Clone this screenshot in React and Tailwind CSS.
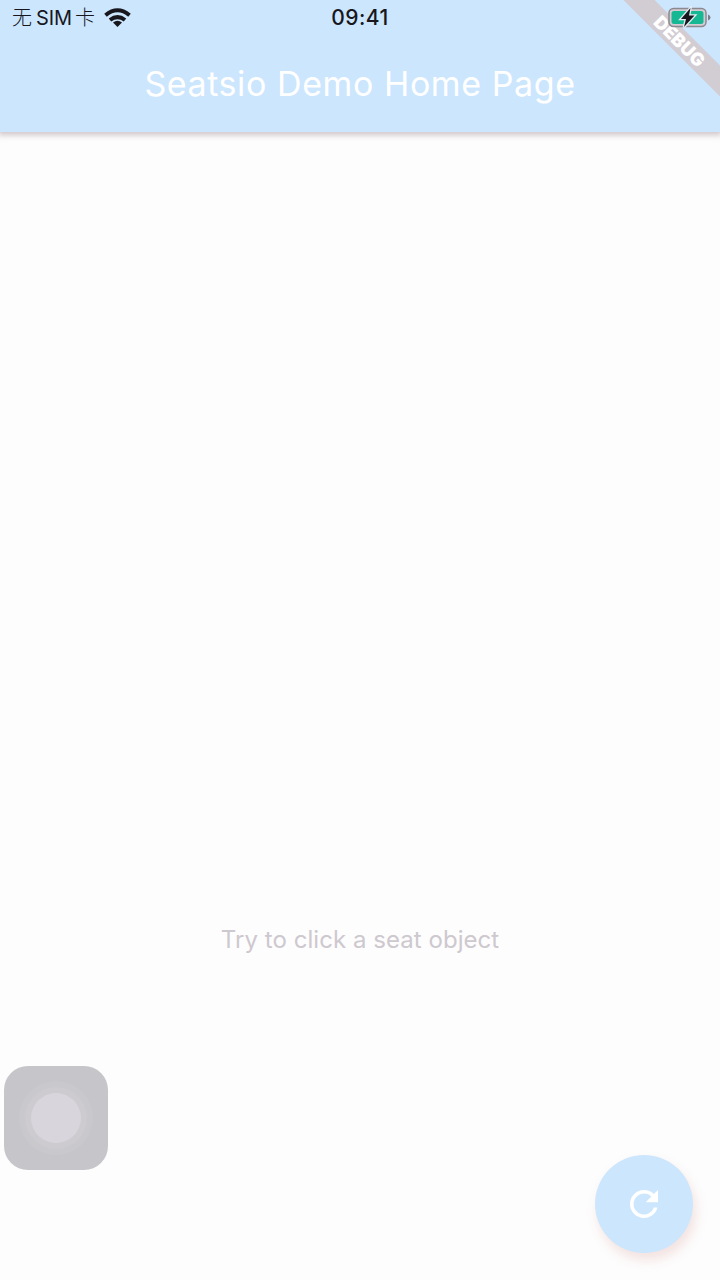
export default function App() {
  return (
    <div className="relative flex h-[1280px] w-[720px] flex-col overflow-hidden bg-[#fdfdfd] font-['Inter','Noto_Sans_CJK_SC',sans-serif]">
      <header className="relative flex h-[132px] shrink-0 flex-col bg-[#cce6fe] shadow-[0_1px_6px_2px_rgba(85,50,65,0.28)]">
        <div className="grid h-9 grid-cols-3 items-center px-3 text-[#17171d]">
          <div className="flex items-center">
            <span className="flex items-center text-[20px] leading-9 whitespace-pre"><span className="font-light">无</span><span className="ml-1 tracking-[-0.1px]">SIM</span><span className="ml-[3px] font-light">卡</span></span>
            <svg className="ml-[9px]" width="27" height="20" viewBox="0 0 27 20" fill="none" stroke="currentColor" strokeWidth="4">
              <path d="M1.5 7.2Q13.5-2.7 25.5 7.2M6 12Q13.5 6.2 21 12" />
              <path d="M9 14.6Q13.5 11 18 14.6L13.5 19Z" fill="currentColor" stroke="none" />
            </svg>
          </div>
          <time className="text-center text-[21px] font-medium tracking-[0.5px]">09:41</time>
          <span />
        </div>
        <h1 className="flex h-24 items-center justify-center pb-px text-[34px] tracking-[0.58px] text-white">Seatsio Demo Home Page</h1>
      </header>

      <main className="flex flex-1 flex-col items-center pt-[790px]">
        <p className="text-[24px] leading-9 tracking-[0.05px] text-[#cec8cf]">Try to click a seat object</p>
      </main>

      <div className="absolute top-[1066px] left-1 flex size-[104px] items-center justify-center rounded-[24px] bg-[#c5c5ca]">
        <div className="flex size-[74px] items-center justify-center rounded-full bg-[#c9c8cd]">
          <div className="flex size-[62px] items-center justify-center rounded-full bg-[#cdcad0]">
            <div className="size-[50px] rounded-full bg-[#d9d5dc]" />
          </div>
        </div>
      </div>

      <button aria-label="Reload" className="absolute top-[1155px] left-[595px] flex size-[98px] items-center justify-center rounded-full bg-[#cce6fe] text-white shadow-[3px_7px_12px_rgba(220,170,165,0.32)]">
        <svg width="42" height="42" viewBox="0 0 24 24" fill="currentColor">
          <path d="M17.65 6.35A7.96 7.96 0 0 0 12 4a8 8 0 1 0 7.73 10h-2.08A6 6 0 1 1 12 6c1.66 0 3.14.69 4.22 1.78L13 11h7V4z" />
        </svg>
      </button>

      <div className="absolute top-0 right-0 size-[100px] overflow-hidden">
        <div className="absolute top-[30px] left-[-20px] flex h-[22px] w-[160px] rotate-45 items-center justify-center bg-[#d2ccd3] text-[18px] font-black tracking-[0.2px] text-white">DEBUG</div>
      </div>
      <svg className="absolute top-[6px] right-[9px]" width="43" height="24" viewBox="0 0 43 24">
        <rect x="1" y="2.5" width="37" height="18" rx="4.5" fill="#d2ccd3" stroke="#8b8990" strokeWidth="1.5" />
        <rect x="3.5" y="5" width="32" height="13" rx="2.5" fill="#16b894" />
        <path d="M40 8.5Q42.5 9.5 42.5 11.5T40 14.5Z" fill="#77808a" />
        <path d="M22.5 2L13 13H18L16 21L26.5 9.5H21Z" fill="#17171d" stroke="#e4edf3" strokeWidth="2.6" paintOrder="stroke" />
      </svg>
    </div>
  );
}
